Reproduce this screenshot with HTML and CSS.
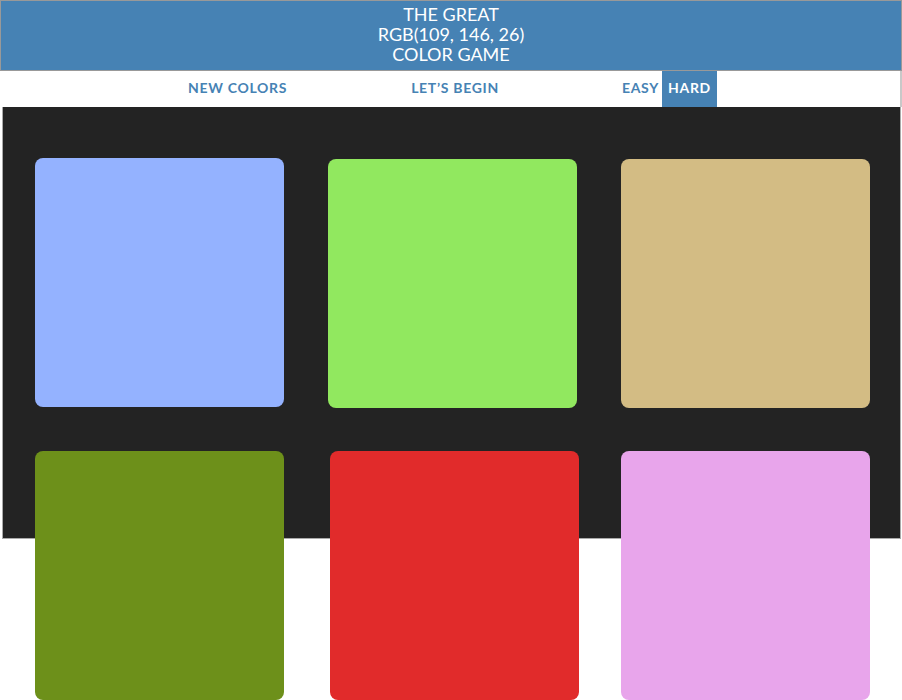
FILE: index.html
```html
<!DOCTYPE html>
<html>
<head>
<meta charset="utf-8">
<title>The Great Color Game</title>
<link rel="stylesheet" href="styles.css">
</head>
<body>
<header class="title-bar">
  <h1 class="title">THE GREAT<br><span class="rgb">RGB(109, 146, 26)</span><br>COLOR GAME</h1>
</header>
<nav class="stripe">
  <button class="btn btn-new">NEW COLORS</button>
  <span class="btn btn-msg">LET’S BEGIN</span>
  <button class="btn btn-easy">EASY</button>
  <button class="btn btn-hard selected">HARD</button>
</nav>
<main class="board">
  <div class="grid">
    <div class="square sq-blue"></div>
    <div class="square sq-green shift-down"></div>
    <div class="square sq-tan shift-down"></div>
    <div class="square sq-olive"></div>
    <div class="square sq-red shift-right"></div>
    <div class="square sq-pink"></div>
  </div>
</main>
</body>
</html>
```
FILE: styles.css
```css
html, body {
  margin: 0;
  padding: 0;
  background: #ffffff;
  font-family: Lato, "Open Sans", sans-serif;
}

.title-bar {
  background: #4682b4;
  border: 1px solid #999999;
  display: flex;
  align-items: center;
  justify-content: center;
  box-sizing: border-box;
  height: 71px;
  padding-bottom: 3px;
}

.title {
  margin: 0;
  color: #ffffff;
  font-weight: 400;
  font-size: 18px;
  line-height: 20px;
  text-align: center;
  text-transform: uppercase;
}

.stripe {
  display: flex;
  align-items: stretch;
  height: 36px;
  padding-left: 182px;
  border-right: 2px solid #c8c8c8;
  box-sizing: border-box;
}

.btn {
  border: none;
  background: transparent;
  color: #4682b4;
  font-family: Lato, "Open Sans", sans-serif;
  font-weight: 700;
  font-size: 14px;
  letter-spacing: 0.7px;
  padding: 0 6px 4px;
  margin: 0;
  display: flex;
  align-items: center;
  cursor: pointer;
}

.btn-msg { margin-left: 112px; }
.btn-easy { margin-left: 111px; padding-right: 3px; }

.selected {
  background: #4682b4;
  color: #ffffff;
}

.board {
  margin: 0 1px 0 2px;
  min-height: 432px;
  background:
    linear-gradient(#232323, #232323) 1px 0 / calc(100% - 2px) 431px no-repeat,
    linear-gradient(#aaaaaa, #aaaaaa) 0 0 / 100% 432px no-repeat;
}

.grid {
  display: grid;
  grid-template-columns: repeat(3, 249px);
  grid-auto-rows: 249px;
  column-gap: 44px;
  row-gap: 44px;
  padding: 51px 0 0 33px;
}

.square {
  border-radius: 8px;
}

.shift-down { margin-top: 1px; margin-bottom: -1px; }
.shift-right { margin-left: 2px; margin-right: -2px; }

.sq-blue { background: #94b2ff; }
.sq-green { background: #91e85f; }
.sq-tan { background: #d3bc84; }
.sq-olive { background: #6d901a; }
.sq-red { background: #e12b2b; }
.sq-pink { background: #e8a5eb; }
```
